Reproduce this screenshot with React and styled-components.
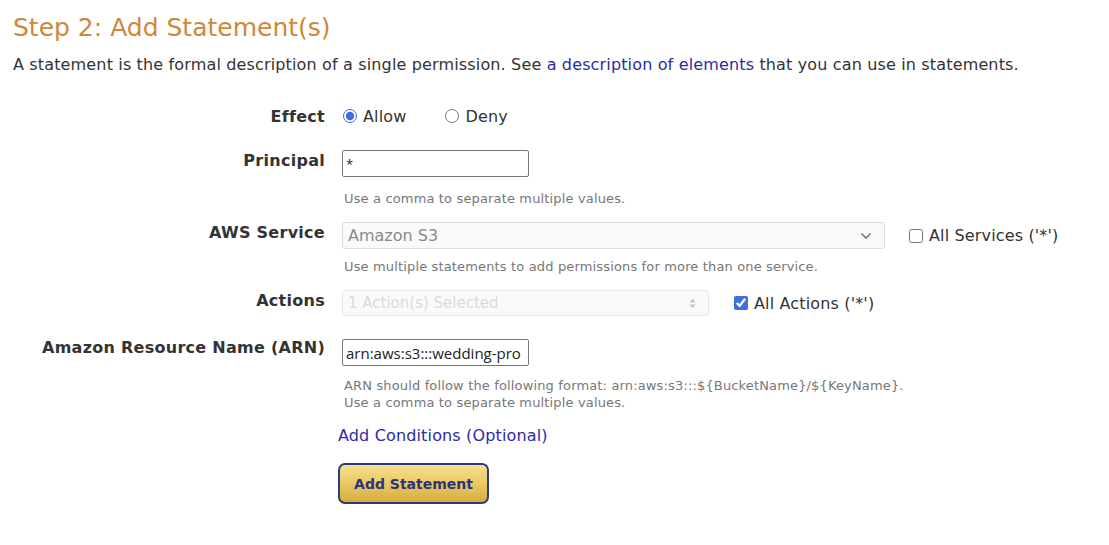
import styled, { createGlobalStyle } from 'styled-components';

const GlobalStyle = createGlobalStyle`
    body {
        margin: 0;
        background: #fff;
        font-family: "DejaVu Sans", Verdana, sans-serif;
        color: #333;
    }
`;

const Chevron = () => (
    <svg width="12" height="8" viewBox="0 0 12 8">
        <path d="M1.5 1.5 L6 6 L10.5 1.5" fill="none" stroke="#777" strokeWidth="1.6" />
    </svg>
);

const UpDown = () => (
    <svg width="7" height="11" viewBox="0 0 7 11">
        <path d="M0.5 4.5 L3.5 0.8 L6.5 4.5 Z" fill="#c4c4c4" />
        <path d="M0.5 6.5 L3.5 10.2 L6.5 6.5 Z" fill="#c4c4c4" />
    </svg>
);

const App = () => {
    return (
        <Page>
            <GlobalStyle />
            <Heading>Step 2: Add Statement(s)</Heading>
            <Intro>
                A statement is the formal description of a single permission. See{' '}
                <Link href="#">a description of elements</Link> that you can use in statements.
            </Intro>

            <Form>
                <Row $mt={30}>
                    <Label>Effect</Label>
                    <Field>
                        <Inline>
                            <Option>
                                <input type="radio" name="effect" defaultChecked />
                                <span>Allow</span>
                            </Option>
                            <Option $ml={38}>
                                <input type="radio" name="effect" />
                                <span>Deny</span>
                            </Option>
                        </Inline>
                    </Field>
                </Row>

                <Row $mt={23}>
                    <Label>Principal</Label>
                    <Field>
                        <TextBox defaultValue="*" $small />
                        <Hint $mt={13}>Use a comma to separate multiple values.</Hint>
                    </Field>
                </Row>

                <Row $mt={15}>
                    <Label>AWS Service</Label>
                    <Field>
                        <Inline>
                            <Select $width={543}>
                                <span>Amazon S3</span>
                                <Chevron />
                            </Select>
                            <Option $ml={23}>
                                <input type="checkbox" />
                                <span>All Services ('*')</span>
                            </Option>
                        </Inline>
                        <Hint $mt={9}>Use multiple statements to add permissions for more than one service.</Hint>
                    </Field>
                </Row>

                <Row $mt={15}>
                    <Label>Actions</Label>
                    <Field>
                        <Inline>
                            <Select $width={367} $faded>
                                <span>1 Action(s) Selected</span>
                                <UpDown />
                            </Select>
                            <Option $ml={24}>
                                <input type="checkbox" defaultChecked />
                                <span>All Actions ('*')</span>
                            </Option>
                        </Inline>
                    </Field>
                </Row>

                <Row $mt={21}>
                    <Label>Amazon Resource Name (ARN)</Label>
                    <Field>
                        <TextBox defaultValue="arn:aws:s3:::wedding-pro" $offset={2} />
                        <Hint $mt={11}>
                            ARN should follow the following format: arn:aws:s3:::$&#123;BucketName&#125;/$&#123;KeyName&#125;.
                            <br />
                            Use a comma to separate multiple values.
                        </Hint>
                    </Field>
                </Row>

                <Actions>
                    <Link href="#" $size={16}>Add Conditions (Optional)</Link>
                    <Button type="button">Add Statement</Button>
                </Actions>
            </Form>
        </Page>
    );
};

export default App;

const Page = styled.div`
    padding: 13px 0 40px 13px;
    letter-spacing: 0.15px;
`;

const Heading = styled.h2`
    margin: 0;
    font-size: 25px;
    font-weight: normal;
    line-height: 30px;
    letter-spacing: 0;
    color: #cf8739;
`;

const Intro = styled.p`
    margin: 11px 0 0;
    font-size: 16px;
    line-height: 22px;
    color: #333;
`;

const Link = styled.a`
    color: #2b2ba6;
    text-decoration: none;
    line-height: 20px;
    font-size: ${props => props.$size ? `${props.$size}px` : 'inherit'};
`;

const Form = styled.div`
    display: flex;
    flex-direction: column;
`;

const Row = styled.div`
    display: grid;
    grid-template-columns: 312px 1fr;
    column-gap: 17px;
    align-items: start;
    margin-top: ${props => props.$mt || 0}px;
`;

const Label = styled.div`
    padding-top: 1px;
    text-align: right;
    font-weight: bold;
    font-size: 16px;
    line-height: 20px;
    letter-spacing: 0.27px;
    color: #333;
`;

const Field = styled.div`
    display: flex;
    flex-direction: column;
    align-items: flex-start;
`;

const Inline = styled.div`
    display: flex;
    align-items: center;
`;

const Option = styled.label`
    display: flex;
    align-items: center;
    gap: 6px;
    height: 20px;
    margin-left: ${props => props.$ml || 0}px;
    font-size: 16px;
    color: #333;
    input {
        margin: 0 0 0 1px;
        width: 14px;
        height: 14px;
        accent-color: #3e6fe0;
    }
`;

const TextBox = styled.input`
    box-sizing: border-box;
    width: 187px;
    height: 27px;
    margin: ${props => props.$offset || 0}px 0 0;
    padding: 0 3px;
    border: 1px solid #767676;
    border-radius: 2px;
    font-family: "Open Sans", "Noto Sans", sans-serif;
    font-size: ${props => props.$small ? '13px' : '15px'};
    letter-spacing: 0;
    color: #222;
    outline: none;
`;

const Select = styled.div`
    box-sizing: border-box;
    width: ${props => props.$width}px;
    height: ${props => props.$faded ? 26 : 27}px;
    padding: 0 12px 0 5px;
    display: flex;
    align-items: center;
    justify-content: space-between;
    background: #fafafa;
    border: 1px solid ${props => props.$faded ? '#e8e8e8' : '#dcdcdc'};
    border-radius: 3px;
    font-size: ${props => props.$faded ? '15px' : '16px'};
    letter-spacing: 0;
    color: ${props => props.$faded ? '#dadada' : '#8a8a8a'};
`;

const Hint = styled.div`
    margin-top: ${props => props.$mt || 0}px;
    padding-left: 2px;
    font-size: 13px;
    line-height: 17px;
    color: #777;
`;

const Actions = styled.div`
    display: flex;
    flex-direction: column;
    align-items: flex-start;
    gap: 17px;
    margin: 15px 0 0 325px;
`;

const Button = styled.button`
    width: 151px;
    height: 41px;
    border: 2px solid #2c3a82;
    border-radius: 7px;
    background: linear-gradient(to bottom, #f6e08f 0%, #e9c865 50%, #d6ad3f 100%);
    font-family: "DejaVu Sans", Verdana, sans-serif;
    font-weight: bold;
    font-size: 14px;
    letter-spacing: 0;
    color: #2c3479;
    cursor: pointer;
`;
